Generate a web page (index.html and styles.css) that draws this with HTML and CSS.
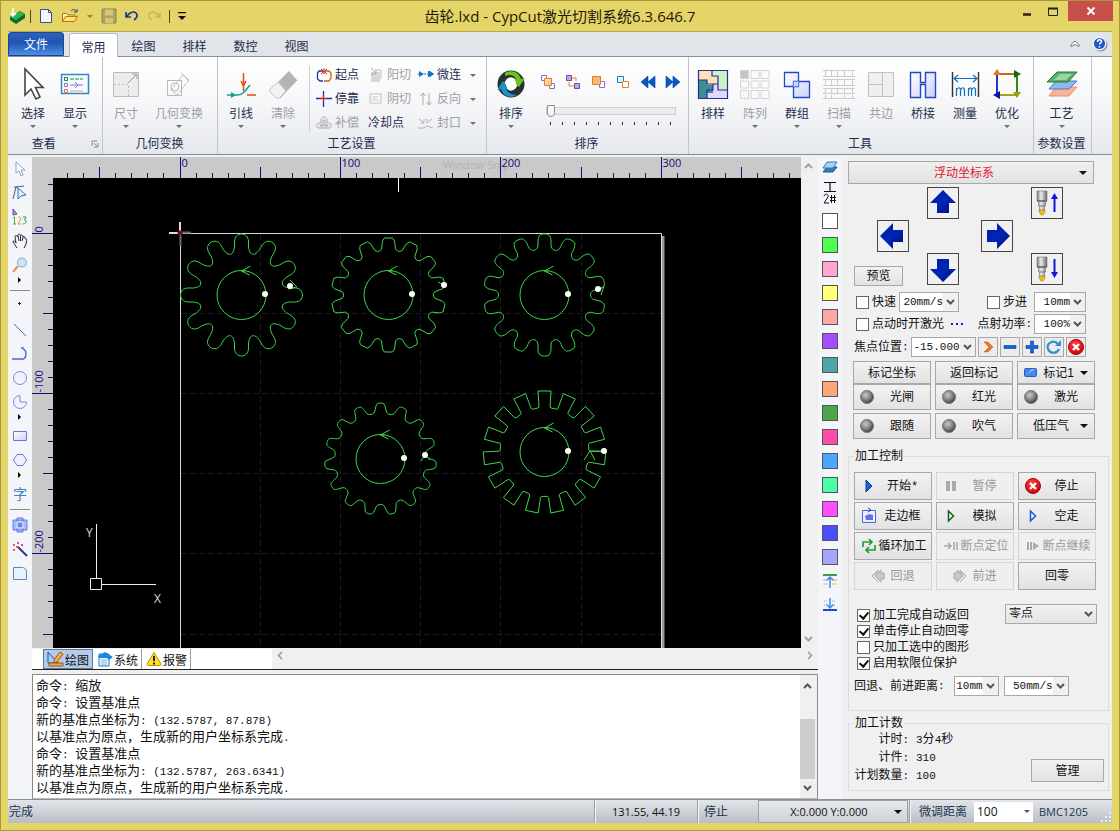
FILE: index.html
```html
<!DOCTYPE html>
<html lang="zh-CN">
<head>
<meta charset="utf-8">
<title>齿轮.lxd - CypCut激光切割系统6.3.646.7</title>
<link rel="stylesheet" href="styles.css">
</head>
<body>
<svg class="defs" width="0" height="0" aria-hidden="true">
  <defs>
    <linearGradient id="gArrow" x1="0" y1="0" x2="1" y2="1"><stop offset="0" stop-color="#0018a8"/><stop offset=".5" stop-color="#0026b8"/><stop offset="1" stop-color="#000c70"/></linearGradient>
    <linearGradient id="gMetal"><stop offset="0" stop-color="#777"/><stop offset=".4" stop-color="#eee"/><stop offset="1" stop-color="#666"/></linearGradient>
    <linearGradient id="gViolet" x1="0" y1="0" x2="1" y2="1"><stop offset="0" stop-color="#fff"/><stop offset="1" stop-color="#cdd0ff"/></linearGradient>
    <linearGradient id="gPeach" x1="0" y1="0" x2="1" y2="1"><stop offset="0" stop-color="#fff0e0"/><stop offset="1" stop-color="#ffb060"/></linearGradient>
    <radialGradient id="gBall" cx=".4" cy=".35" r=".7"><stop offset="0" stop-color="#c8c8c8"/><stop offset=".5" stop-color="#888"/><stop offset="1" stop-color="#333"/></radialGradient>
    <radialGradient id="gStop" cx=".4" cy=".3" r=".8"><stop offset="0" stop-color="#ff4040"/><stop offset="1" stop-color="#c00008"/></radialGradient>
    <symbol id="chev" viewBox="0 0 9 6"><path d="M1 1l3.500 3.500L8 1" fill="none" stroke="#555" stroke-width="2"/></symbol>
    <symbol id="tri" viewBox="0 0 8 4"><path d="M0 0h8L4 4z" fill="currentColor"/></symbol>
    <symbol id="stop" viewBox="0 0 16 16"><circle cx="8" cy="8" r="7.500" fill="url(#gStop)" stroke="#a00"/><path d="M5 5l6 6M11 5l-6 6" stroke="#fff" stroke-width="2.400"/></symbol>
    <symbol id="ball" viewBox="0 0 14 14"><circle cx="7" cy="7" r="6.500" fill="url(#gBall)" stroke="#777"/></symbol>
    <symbol id="nozzle" viewBox="0 0 12 26"><path d="M1 1h10v10H1zM2.500 11h7v5h-7zM3.500 16h5v4h-5z" fill="url(#gMetal)" stroke="#777" stroke-width=".6"/><path d="M1 11h10" stroke="#555"/><path d="M3 20h6v2l-2 3H5l-2-3z" fill="#f0b820" stroke="#a07000" stroke-width=".5"/></symbol>
  </defs>
</svg>
<div class="window">
  <header class="titlebar">
    <div class="quick">
      <svg width="18" height="18" viewBox="0 0 18 18"><path d="M2 10l10-6 5 3v4l-9 6-6-4z" fill="#0b6b2c"/><path d="M2 10l10-6 5 3-9 6z" fill="#35b050"/><path d="M5 1v8M3 6l2 3 3-3" stroke="#fff" fill="none" stroke-width="1.500"/></svg>
      <i class="bar"></i>
      <button aria-label="新建"><svg width="14" height="16" viewBox="0 0 14 16"><path d="M1.500 1.500h8l3 3v10h-11z" fill="#f4f5ff" stroke="#44468c"/><path d="M9.500 1.500v3h3" fill="none" stroke="#44468c"/></svg></button>
      <button aria-label="打开"><svg width="18" height="16" viewBox="0 0 18 16"><path d="M1.500 13.500v-8h4l1.500 1.500h7v2" fill="#fff1b0" stroke="#b87800"/><path d="M1.500 13.500l3-5h12l-3 5z" fill="#ffdf80" stroke="#b87800"/><path d="M10 3c2-2 4-2 6 1M16 1v3h-3" fill="none" stroke="#24408c"/></svg></button>
      <svg class="dim" width="6" height="3"><use href="#tri"/></svg>
      <button aria-label="保存"><svg width="16" height="16" viewBox="0 0 16 16"><path d="M1 1h14v14H1z" fill="#b0a35e" stroke="#918544"/><path d="M4 1.500h8v6H4zM4 10h8v5H4z" fill="#d2c67c"/></svg></button>
      <button aria-label="撤销"><svg width="14" height="12" viewBox="0 0 14 12"><path d="M1 2v5h5M1.500 6.500C5 2 9 1 11 3c2 2 1 5-2 7" fill="none" stroke="#1a3c96" stroke-width="1.700"/></svg></button>
      <button aria-label="重做"><svg width="14" height="12" viewBox="0 0 14 12"><path d="M13 2v5H8M12.500 6.500C9 2 5 1 3 3c-2 2-1 5 2 7" fill="none" stroke="#c2b45c" stroke-width="1.500"/></svg></button>
      <i class="bar"></i>
      <svg width="8" height="8" viewBox="0 0 8 8"><path d="M0 .5h8" stroke="#111" stroke-width="1.500"/><path d="M0 4h8L4 8z" fill="#111"/></svg>
    </div>
    <h1>齿轮.lxd - CypCut激光切割系统6.3.646.7</h1>
    <div class="winbtns">
      <button aria-label="最小化"><svg width="10" height="14" viewBox="0 0 10 14"><path d="M1 10.500h8" stroke="#222" stroke-width="2.500"/></svg></button>
      <button aria-label="最大化"><svg width="12" height="14" viewBox="0 0 12 14"><path d="M1.500 4.500h9v7h-9z" fill="none" stroke="#222"/><path d="M1 4.500h10" stroke="#222" stroke-width="2"/></svg></button>
      <button class="close" aria-label="关闭"><svg width="10" height="10" viewBox="0 0 10 10"><path d="M1.500 1.500l7 7M8.500 1.500l-7 7" stroke="#fff" stroke-width="1.800"/></svg></button>
    </div>
  </header>

  <main class="app">
    <nav class="tabs">
      <button class="file">文件</button>
      <button class="active">常用</button>
      <button>绘图</button><button>排样</button><button>数控</button><button>视图</button>
      <div class="help">
        <svg width="10" height="8" viewBox="0 0 10 8"><path d="M1 4.500l4-3.500 4 3.500v2L5 4.500 1 6.500z" fill="#fff" stroke="#777"/></svg>
        <svg width="16" height="16" viewBox="0 0 16 16"><circle cx="8.500" cy="8.500" r="7" fill="#7f8aa0"/><circle cx="7.500" cy="7.500" r="7" fill="#f4f6fb"/><circle cx="7.500" cy="7.500" r="5.600" fill="#2458c8"/><path d="M5.500 6c0-3 4-2.800 4-.6 0 1.400-2 1.600-2 3.200M7.500 10v1.600" fill="none" stroke="#fff" stroke-width="1.500"/></svg>
      </div>
    </nav>

    <section class="ribbon">
      <div class="group">
        <div class="tools">
          <button class="big"><svg width="32" height="34" viewBox="0 0 32 34"><path d="M8 2v26l6-6 5 10 4-2-4.500-9.500H26z" fill="#fff" stroke="#444" stroke-width="1.600"/></svg>选择<svg class="dd"><use href="#tri"/></svg></button>
          <button class="big"><svg width="32" height="34" viewBox="0 0 32 34"><path d="M2.500 7.500h27v19h-27z" fill="#f4faff" stroke="#3584c8" stroke-width="1.500"/><g fill="none"><path d="M5.500 10.500h3v3h-3z" stroke="#109020"/><path d="M5.500 16.500h3v3h-3z" stroke="#9070d8"/><path d="M5.500 22.500h3v3h-3z" stroke="#e87830"/><path d="M11 12h13" stroke="#109020" stroke-dasharray="4 1"/><path d="M11 18h13M16 15l3 3-3 3" stroke="#9070d8"/><path d="M11 24h13" stroke="#f09888"/></g></svg>显示<svg class="dd"><use href="#tri"/></svg></button>
        </div>
        <div class="cap">查看 <svg class="launch" width="8" height="8" viewBox="0 0 8 8"><path d="M1 6V1h5M3 3l3 3M7 3v4H3" fill="none" stroke="#888"/></svg></div>
      </div>
      <div class="group g2">
        <div class="tools">
          <button class="big" disabled><svg width="32" height="34" viewBox="0 0 32 34"><g fill="#ececee" stroke="#bcbcbc"><path d="M3.500 5.500h25v24h-25z"/><path d="M4 17.500h14.500V29" stroke-dasharray="2 2" fill="none"/><path d="M18 16l8-8M22 7h5v5" fill="none" stroke="#999"/></g></svg>尺寸<svg class="dd"><use href="#tri"/></svg></button>
          <button class="big wide" disabled><svg width="32" height="34" viewBox="0 0 32 34"><g fill="none" stroke="#b8b8b8"><path d="M4.500 13.500h14v15h-14z"/><path d="M8 23l12-15 6 5-12 15z" stroke-dasharray="3 1"/><circle cx="12" cy="20" r="4"/><path d="M18 6l8 8"/></g></svg>几何变换<svg class="dd"><use href="#tri"/></svg></button>
        </div>
        <div class="cap">几何变换</div>
      </div>
      <div class="group g3">
        <div class="tools">
          <button class="big"><svg width="32" height="34" viewBox="0 0 32 34"><path d="M18.500 6v18M16 14l2.500 5 2.500-5M22 28h9" fill="none" stroke="#e84818" stroke-width="1.500"/><path d="M2 28h10c7 0 9-6 13-10" fill="none" stroke="#10a088" stroke-width="1.500"/><path d="M6 25l5 3-5 3z" fill="#10a088"/></svg>引线<svg class="dd"><use href="#tri"/></svg></button>
          <button class="big" disabled><svg width="32" height="34" viewBox="0 0 32 34"><path d="M11 15L22 4l8 9-11 11z" fill="#b4b4b4"/><path d="M11 15l8 9-6 7H9l-6-6v-3z" fill="#f2f2f2" stroke="#c4c4c4"/><path d="M13 31L30 13" stroke="#aaa"/></svg>清除<svg class="dd"><use href="#tri"/></svg></button>
          <div class="small">
            <button><svg viewBox="0 0 16 16"><path d="M7 4H3L1.500 6v6L4 14h3" fill="none" stroke="#2038a0" stroke-width="1.300"/><path d="M8 14h5l2-3V6l-2-2H9" fill="none" stroke="#c86010" stroke-width="1.300"/><path d="M5 2l6 5M11 2L5 7M8 1v6" stroke="#e02020"/></svg>起点</button>
            <button disabled><svg viewBox="0 0 16 16"><path d="M3 5h9v10H3z" fill="#d8d8d8"/><path d="M3 1l5 5M8 2v5H3" stroke="#aaa" fill="none"/><path d="M9 3h4v9" stroke="#bbb" fill="none"/></svg>阳切</button>
            <button><svg viewBox="0 0 16 16"><path d="M0 7h16" stroke="#0878d0" stroke-dasharray="2 1"/><path d="M1 4l5 3-5 3zM10 4h2l4 3-4 3h-2z" fill="#0878d0"/></svg>微连<svg class="dd"><use href="#tri"/></svg></button>
            <button><svg viewBox="0 0 16 16"><path d="M7.500 0v5M7.500 10v6M0 7.500h5M10 7.500h6" stroke="#2828a8" stroke-width="1.300"/><path d="M7.500 5v5M5 7.500h5" stroke="#e02020" stroke-width="1.500"/></svg>停靠</button>
            <button disabled><svg viewBox="0 0 16 16"><path d="M1 2h13v11H1z" fill="#ddd"/><path d="M4 4.500h7v6H4zM7 7h5" fill="none" stroke="#fff"/></svg>阴切</button>
            <button disabled><svg viewBox="0 0 16 16"><path d="M5 14V2M2.500 5L5 2l2.500 3M11 2v12M8.500 11l2.500 3 2.500-3" fill="none" stroke="#aaa"/></svg>反向<svg class="dd"><use href="#tri"/></svg></button>
            <button disabled><svg viewBox="0 0 16 16"><path d="M5 8V5c0-4 6-4 6 0v3h2c3 0 3 5 0 5H3c-3 0-3-5 0-5zM7 10V5h2v5h3v1H4v-1z" fill="none" stroke="#aaa"/></svg>补偿</button>
            <button>冷却点</button>
            <button disabled><svg viewBox="0 0 16 16"><path d="M0 13h6l3-2 6 2M1 4l5 4M6 4v4H3M14 4l-5 4M9 4v4" fill="none" stroke="#b4b4b4"/></svg>封口<svg class="dd"><use href="#tri"/></svg></button>
          </div>
        </div>
        <div class="cap">工艺设置</div>
      </div>
      <div class="group g4">
        <div class="tools">
          <button class="big"><svg width="32" height="34" viewBox="0 0 32 34"><circle cx="16" cy="17" r="10" fill="none" stroke="#243230" stroke-width="7"/><path d="M10 6c7-4 14-1 16 6l4-1-6 9-7-7 4-1c-2-4-6-5-11-3z" fill="#6cc020"/><path d="M22 28c-7 4-14 1-16-6l-4 1 6-9 6 7-3 1c2 4 6 6 11 6z" fill="#2090c8"/><ellipse cx="16" cy="17" rx="5" ry="6.500" fill="#fff"/></svg>排序<svg class="dd"><use href="#tri"/></svg></button>
          <div class="order">
            <div class="orderrow">
              <button aria-label="顺序1"><svg viewBox="0 0 16 16"><path d="M1.500 1.500h5v5h-5z" fill="#fff" stroke="#9068d0"/><path d="M9.500 9.500h5v5h-5z" fill="#fff" stroke="#9068d0"/><path d="M4.500 4.500h7v7h-7z" fill="url(#gPeach)" stroke="#e88020"/></svg></button>
              <button aria-label="顺序2"><svg viewBox="0 0 16 16"><path d="M6 4h5v3M4 8v4h5" fill="none" stroke="#e88020"/><path d="M1.500 1.500h5v5h-5zM9.500 9.500h5v5h-5z" fill="#b8a8ec" stroke="#6050a8"/></svg></button>
              <button aria-label="顺序3"><svg viewBox="0 0 16 16"><path d="M9.500 7.500h5v6h-5z" fill="#fff" stroke="#9068d0"/><path d="M2.500 2.500h8v8h-8z" fill="#f8b870" stroke="#e08030"/></svg></button>
              <button aria-label="顺序4"><svg viewBox="0 0 16 16"><path d="M2.500 2.500h6v6h-6z" fill="#e4f4ff" stroke="#2080c0"/><path d="M7.500 7.500h6v6h-6z" fill="#fff" stroke="#e88020"/></svg></button>
              <button aria-label="向前"><svg viewBox="0 0 16 16"><path d="M8 2v12L1 8zM15 2v12L8 8z" fill="#0858c8" stroke="#043c98" stroke-width=".6"/></svg></button>
              <button aria-label="向后"><svg viewBox="0 0 16 16"><path d="M1 2v12l7-6zM8 2v12l7-6z" fill="#0858c8" stroke="#043c98" stroke-width=".6"/></svg></button>
            </div>
            <input type="range" min="0" max="10" value="0" aria-label="排序进度">
            <div class="ticks"></div>
          </div>
        </div>
        <div class="cap">排序</div>
      </div>
      <div class="group g5">
        <div class="tools">
          <button class="big"><svg width="32" height="34" viewBox="0 0 32 34"><path d="M1 3h30v29H1z" fill="#c8f4c8"/><path d="M1 3h14v6h6v8H10v-4H1z" fill="#fce0b8"/><path d="M1 13h9v5h6v8h-6v6H1z" fill="#3c9090"/><path d="M10 32v-6h6v-9h5v6h10v9z" fill="#e0d8ff"/><path d="M1.500 3.500h29v28h-29zM15 3v6h6v14h10M1 13h9v4h11M16 17v6h-6v9" fill="none" stroke="#2c2c94" stroke-width="1.200"/></svg>排样</button>
          <button class="big" disabled><svg width="32" height="34" viewBox="0 0 32 34"><path d="M2 3h8v8H2z" fill="#c4c4c4"/><path d="M1.500 3.500h8v8h-8zM12 3.500h8v8h-8zM22 3.500h8v8h-8zM1.500 14h8v7h-8zM12 14h8v7h-8zM22 14h8v7h-8zM1.500 23.500h8v8h-8zM12 23.500h8v8h-8zM22 23.500h8v8h-8z" fill="none" stroke="#d4d4d4"/></svg>阵列<svg class="dd"><use href="#tri"/></svg></button>
          <button class="big"><svg width="32" height="34" viewBox="0 0 32 34"><path d="M3.500 5.500h14v14h-14zM12.500 14.500h16v16h-16z" fill="url(#gViolet)" stroke="#2448c0" stroke-width="1.300"/><path d="M12.500 14.500h5v5h-5z" fill="#c8dcff" stroke="#6088e0"/></svg>群组<svg class="dd"><use href="#tri"/></svg></button>
          <button class="big" disabled><svg width="32" height="34" viewBox="0 0 32 34"><path d="M0 3.500h32M0 9.500h32M0 12.500h32M0 18.500h32M0 21.500h32M0 26.500h32M0 31.500h32M2.500 3v6M8.500 3v6M14.500 3v6M21.500 3v6M29.500 3v6M2.500 12v6M8.500 12v6M14.500 12v6M21.500 12v6M29.500 12v6M2.500 21v5M8.500 21v5M14.500 21v5M21.500 21v5M29.500 21v5M2.500 28v4M8.500 28v4M21.500 28v4M29.500 28v4" stroke="#ccc"/></svg>扫描<svg class="dd"><use href="#tri"/></svg></button>
          <button class="big" disabled><svg width="32" height="34" viewBox="0 0 32 34"><path d="M3.500 5.500h25v24h-25zM17.500 5v25M3 17.500h14" fill="#efeff1" stroke="#c0c0c0"/></svg>共边</button>
          <button class="big"><svg width="32" height="34" viewBox="0 0 32 34"><path d="M3.500 5.500h10v10h5v-10h10v25h-10v-13h-5v13h-10z" fill="url(#gViolet)" stroke="#2448c0" stroke-width="1.400"/></svg>桥接</button>
          <button class="big"><svg width="32" height="34" viewBox="0 0 32 34"><path d="M3.500 5v25M29.500 5v25" stroke="#333" stroke-width="1.400"/><path d="M5 11.500h23M9 8l-4 3.500L9 15M24 8l4 3.500-4 3.500M7.500 29v-8M7.500 23c1-3 4-3 4 0v6M11.500 23c1-3 4-3 4 0v6M19.500 29v-8M19.500 23c1-3 3-3 3 0v6M22.500 23c1-3 4-3 4 0v6" fill="none" stroke="#1070c0" stroke-width="1.200"/></svg>测量</button>
          <button class="big"><svg width="32" height="34" viewBox="0 0 32 34"><path d="M6 7h20" stroke="#c86818" stroke-width="2"/><path d="M26 7v21" stroke="#289018" stroke-width="2"/><path d="M6 28h20" stroke="#b0a010" stroke-width="2"/><path d="M6 7v21" stroke="#2038c8" stroke-width="2"/><path d="M2 8l4-6 4 6z" fill="#f07020"/><path d="M23 3l7 4-7 4z" fill="#206010"/><path d="M22 25h8l-4 6z" fill="#90a010"/><path d="M9 24l-7 4 7 4z" fill="#1010b0"/></svg>优化<svg class="dd"><use href="#tri"/></svg></button>
        </div>
        <div class="cap">工具</div>
      </div>
      <div class="group g6">
        <div class="tools">
          <button class="big"><svg width="32" height="34" viewBox="0 0 32 34"><path d="M3 29l7-9h21l-8 9z" fill="#f8b498" stroke="#f08868"/><path d="M3 22l7-8h21l-8 8z" fill="#90b8ec" stroke="#4878d0"/><path d="M1 15L11 5h20l-9 10z" fill="#58b070" stroke="#207838"/><path d="M8 13l6-6h12l-6 6z" fill="#98d8a4"/></svg>工艺<svg class="dd"><use href="#tri"/></svg></button>
        </div>
        <div class="cap">参数设置</div>
      </div>
    </section>

    <div class="work">
      <aside class="lefttools">
        <button aria-label="选择工具"><svg viewBox="0 0 16 16"><path d="M4 1v11l3-2 2 5 2-1-2-5h4z" fill="#fff" stroke="#88a4d0"/></svg></button>
        <button aria-label="节点编辑"><svg viewBox="0 0 16 16"><path d="M1 14L4 2l8-1M2 2h4" fill="none" stroke="#405c90"/><path d="M6 3v11l3-3 5-1z" fill="#e0f0ff" stroke="#3070b8"/></svg></button>
        <button aria-label="排序工具"><svg viewBox="0 0 16 16"><path d="M1 0v6l4-1z" fill="#b090f0" stroke="#6048a8"/><g fill="none"><path d="M1 9l1.500-1v7M1 15h3" stroke="#50a840"/><path d="M6 9c1-2 3-1 3 1L6 15h3.500" stroke="#e0a020"/><path d="M11 8h3l-1.500 3c3 0 2 4-1.500 4" stroke="#309858"/></g></svg></button>
        <button aria-label="平移"><svg viewBox="0 0 16 16"><path d="M5 15L1 9c0-2 2-1 3 1L3 4c0-2 2-2 2.500 0L6 2c1-2 2-1 2.500 1 1-2 2.500-1 2.500 1 1.500-1 2.500 0 2 2 2-1 2 1 1 5l-2 4M6 3l1 5M8.500 3v5M11 4l-1 4" fill="none" stroke="#282838"/></svg></button>
        <button aria-label="缩放"><svg viewBox="0 0 16 16"><path d="M6 9l-5 6" stroke="#e89870" stroke-width="2.500"/><circle cx="10" cy="5.500" r="4.500" fill="#c8e8f8" stroke="#78a8c8"/></svg></button>
        <i class="fly"></i><hr>
        <button aria-label="点"><svg viewBox="0 0 16 16"><path d="M7.500 4v3M6 5.500h3" stroke="#222"/></svg></button>
        <button aria-label="直线"><svg viewBox="0 0 16 16"><path d="M2 2l12 12" stroke="#5068b8"/></svg></button>
        <button aria-label="圆弧"><svg viewBox="0 0 16 16"><path d="M1 13h9c5 0 5-9 1-10" fill="none" stroke="#4870c8" stroke-width="1.400"/><path d="M0 12h2v2H0zM9 12h3v2H9zM9 1h3v2H9z" fill="#6890d8"/></svg></button>
        <button aria-label="圆"><svg viewBox="0 0 16 16"><circle cx="8" cy="8" r="6.500" fill="#f0f2ff" stroke="#8088d8"/></svg></button>
        <button aria-label="扇形"><svg viewBox="0 0 16 16"><path d="M8 1.500a6.500 6.500 0 1 0 6.500 6.500H8z" fill="#f0f2ff" stroke="#8088d8"/></svg></button>
        <i class="fly"></i>
        <button aria-label="矩形"><svg viewBox="0 0 16 16"><path d="M1.500 3.500h13v9h-13z" fill="url(#gViolet)" stroke="#7078c8"/></svg></button>
        <button aria-label="多边形"><svg viewBox="0 0 16 16"><path d="M5 2.500h6L14.500 8 11 13.500H5L1.500 8z" fill="#eef2ff" stroke="#6880c8"/></svg></button>
        <i class="fly"></i>
        <button class="zi">字</button>
        <hr>
        <button aria-label="阵列工具"><svg viewBox="0 0 16 16"><path d="M1 3h6v10H1zM9 3h6v10H9zM5 1h6v14H5z" fill="#a8b8f8" stroke="#6080e0"/><path d="M5 5h6v6H5z" fill="#6888f0" stroke="#fff"/></svg></button>
        <button aria-label="魔棒"><svg viewBox="0 0 16 16"><path d="M6 6l9 9" stroke="#383090" stroke-width="2"/><path d="M1 3h2v2H1zM5 1h2v2H5zM9 3h2v2H9zM1 8h2v2H1zM4 5h2v2H4z" fill="#e05870"/></svg></button>
        <button aria-label="倒角"><svg viewBox="0 0 16 16"><path d="M1.500 2.500h9c2 0 4 2 4 4v8h-13z" fill="#e8f2ff" stroke="#5888c0"/></svg></button>
      </aside>

      <section class="center">
        <div class="stage">
          <svg class="hruler" id="hruler"></svg>
          <svg class="vruler" id="vruler"></svg>
          <svg class="canvas" id="canvas">
            <g id="grid" stroke="#191922" stroke-dasharray="6 3"></g>
            <path d="M345.500 0v14" stroke="#fff"/>
            <path d="M610 58v800" stroke="#999" stroke-width="3"/>
            <path d="M127.500 900V55.500H608.500V900" fill="none" stroke="#d8d8d8"/>
            <path d="M116 55h10M127 44v10" stroke="#ddd" stroke-width="2"/>
            <path d="M128 54.500h10M127.500 58v10" stroke="#666" stroke-width="2"/>
            <circle cx="127" cy="55" r="2.500" fill="#700818"/>
            <g id="gears" fill="none" stroke="#3cd84a"></g>
            <g fill="none" stroke="#eee"><path d="M43.500 346v55M48 406.500h55M37.500 400.500h11v11h-11z"/></g>
            <g class="axis"><text x="33" y="359">Y</text><text x="101" y="425">X</text></g>
          </svg>
          <div class="vscroll">
            <svg width="9" height="6"><use href="#chev" transform="rotate(180 4.500 3)"/></svg>
            <svg width="9" height="6"><use href="#chev"/></svg>
          </div>
        </div>
        <div class="logtabs">
          <div class="tabset">
            <button class="on"><svg width="17" height="16" viewBox="0 0 17 16"><path d="M1 1v11h10z" fill="#a8ccff" stroke="#1850b0"/><path d="M7 9l6-8 3 2-6 8-3 1z" fill="#ffb030" stroke="#a05010"/><path d="M2 12h14v3H2z" fill="#e8b050" stroke="#905818"/></svg><span>绘图</span></button>
            <button><svg width="16" height="16" viewBox="0 0 16 16"><path d="M2 3h10v12H2z" fill="#e8f4ff" stroke="#2080d0"/><path d="M1 5l7-4 8 5-4 3-2-2H2z" fill="#1888e0"/><path d="M4 9h6M4 11h6M4 13h6" stroke="#88b8e8"/></svg><span>系统</span></button>
            <button><svg width="16" height="16" viewBox="0 0 16 16"><path d="M8 1.500L15 13c0 1-.5 1.500-1.500 1.500h-11C1.500 14.500 1 14 1 13z" fill="#ffe020" stroke="#b89000"/><path d="M8 5v5M8 11.500v2" stroke="#222" stroke-width="2"/></svg><span>报警</span></button>
          </div>
          <div class="hscroll">
            <svg width="6" height="9" viewBox="0 0 6 9"><path d="M5 1L1.500 4.500 5 8" fill="none" stroke="#999" stroke-width="1.500"/></svg>
            <svg width="6" height="9" viewBox="0 0 6 9"><path d="M1 1l3.500 3.500L1 8" fill="none" stroke="#999" stroke-width="1.500"/></svg>
          </div>
        </div>
        <div class="log">
          <div class="lines">
            <p>命令<span>: </span>缩放</p>
            <p>命令<span>: </span>设置基准点</p>
            <p>新的基准点坐标为<span>: (132.5787, 87.878)</span></p>
            <p>以基准点为原点，生成新的用户坐标系完成<span>.</span></p>
            <p>命令<span>: </span>设置基准点</p>
            <p>新的基准点坐标为<span>: (132.5787, 263.6341)</span></p>
            <p>以基准点为原点，生成新的用户坐标系完成<span>.</span></p>
          </div>
          <div class="logscroll">
            <svg width="9" height="6"><use href="#chev" transform="rotate(180 4.500 3)"/></svg>
            <i></i>
            <svg width="9" height="6"><use href="#chev"/></svg>
          </div>
        </div>
      </section>

      <aside class="layers">
        <button class="stack" aria-label="图层"><svg viewBox="0 0 16 16"><path d="M1 13l4-5h10l-4 5z" fill="#3878b8" stroke="#205890"/><path d="M1 9l4-6h10l-4 6z" fill="#a8d4f4" stroke="#3878b0"/></svg></button>
        <button class="proc" aria-label="工艺图层"><svg viewBox="0 0 14 24"><path d="M1 1.500h12M1 10.500h12M7 2v8" fill="none" stroke="#111" stroke-width="1.200"/><path d="M1 15c1-3 5-2 4 1l-4 6h5M7 16.500h6M7 19.500h6M8.500 14v8M11.500 14v8" fill="none" stroke="#111"/></svg></button>
        <button class="sw" aria-label="背景"></button>
        <button class="sw c1" aria-label="图层1"></button>
        <button class="sw c2" aria-label="图层2"></button>
        <button class="sw c3" aria-label="图层3"></button>
        <button class="sw c4" aria-label="图层4"></button>
        <button class="sw c5" aria-label="图层5"></button>
        <button class="sw c6" aria-label="图层6"></button>
        <button class="sw c7" aria-label="图层7"></button>
        <button class="sw c8" aria-label="图层8"></button>
        <button class="sw c9" aria-label="图层9"></button>
        <button class="sw c10" aria-label="图层10"></button>
        <button class="sw c11" aria-label="图层11"></button>
        <button class="sw c12" aria-label="图层12"></button>
        <button class="sw c13" aria-label="图层13"></button>
        <button class="sw c14" aria-label="图层14"></button>
        <button aria-label="最先"><svg viewBox="0 0 16 16"><path d="M1 2h14" stroke="#38a048" stroke-width="2"/><path d="M8 15V4M4.500 7.500L8 4l3.500 3.500" fill="none" stroke="#3890e0" stroke-width="1.500"/><path d="M1 7h3M12 7h3" stroke="#80c0f0"/><path d="M1 11h5M10 11h5" stroke="#e0c050"/></svg></button>
        <button aria-label="最后"><svg viewBox="0 0 16 16"><path d="M1 13h14" stroke="#2048c8" stroke-width="2"/><path d="M8 1v10M4.500 7.500L8 11l3.500-3.500" fill="none" stroke="#3890e0" stroke-width="1.500"/><path d="M2 4h4M10 4h4M2 8h2M12 8h2" stroke="#60b0f0" stroke-dasharray="1 1"/></svg></button>
      </aside>

      <aside class="panel">
        <button class="coord"><span>浮动坐标系</span><svg width="8" height="4"><use href="#tri"/></svg></button>
        <div class="jog">
          <button class="up" aria-label="上"><svg viewBox="0 0 26 26"><path d="M13 0l13 13h-7v10H7V13H0z" fill="url(#gArrow)"/></svg></button>
          <button class="left" aria-label="左"><svg viewBox="0 0 26 26"><path d="M0 13L13 0v7h10v12H13v7z" fill="url(#gArrow)"/></svg></button>
          <button class="right" aria-label="右"><svg viewBox="0 0 26 26"><path d="M26 13L13 0v7H3v12h10v7z" fill="url(#gArrow)"/></svg></button>
          <button class="down" aria-label="下"><svg viewBox="0 0 26 26"><path d="M13 26l13-13h-7V3H7v10H0z" fill="url(#gArrow)"/></svg></button>
          <button class="zup" aria-label="Z轴上"><svg viewBox="0 0 26 26"><use href="#nozzle" width="12" height="26" x="2"/><path d="M20.500 22V6" stroke="#1414d8" stroke-width="2"/><path d="M17 9l3.500-6L24 9z" fill="#1414d8"/></svg></button>
          <button class="zdown" aria-label="Z轴下"><svg viewBox="0 0 26 26"><use href="#nozzle" width="12" height="26" x="2"/><path d="M20.500 3v16" stroke="#1414d8" stroke-width="2"/><path d="M17 16l3.500 6 3.500-6z" fill="#1414d8"/></svg></button>
          <button class="btn preview">预览</button>
        </div>
        <div class="row">
          <label><input type="checkbox">快速</label>
          <span class="combo w60"><select aria-label="快速速度"><option>20mm/s</option></select><svg><use href="#chev"/></svg></span>
          <label class="push"><input type="checkbox">步进</label>
          <span class="combo w52"><select aria-label="步进距离"><option>10mm</option></select><svg><use href="#chev"/></svg></span>
        </div>
        <div class="row">
          <label><input type="checkbox">点动时开激光</label>
          <svg class="dots" width="12" height="4" viewBox="0 0 12 4"><path d="M0 1h2v2H0zM5 1h2v2H5zM10 1h2v2h-2z" fill="#1818e0"/></svg>
          <label class="push tight" for="pw">点射功率<span class="mono">:</span></label>
          <span class="combo w52"><select id="pw"><option>100%</option></select><svg><use href="#chev"/></svg></span>
        </div>
        <div class="row focus">
          <label for="fp">焦点位置<span class="mono">:</span></label>
          <span class="combo w65"><select id="fp"><option>-15.000</option></select><svg><use href="#chev"/></svg></span>
          <button aria-label="定位"><svg viewBox="0 0 16 16"><path d="M4 3l5 5-5 5h4l5-5-5-5z" fill="#e87828" stroke="#b85010" stroke-width=".5"/></svg></button>
          <button aria-label="减"><svg viewBox="0 0 16 16"><path d="M2 6.500h12v3H2z" fill="#1068d8" stroke="#083c90" stroke-width=".6"/></svg></button>
          <button aria-label="加"><svg viewBox="0 0 16 16"><path d="M2 6.500h4.500V2h3v4.500H14v3H9.500V14h-3V9.500H2z" fill="#1068d8" stroke="#083c90" stroke-width=".6"/></svg></button>
          <button aria-label="刷新"><svg viewBox="0 0 16 16"><path d="M13 10c-2 5-9 5-11 0-2-6 6-10 10-5" fill="none" stroke="#3090d0" stroke-width="2.200"/><path d="M9 7h6V1z" fill="#3090d0"/></svg></button>
          <button aria-label="取消"><svg><use href="#stop"/></svg></button>
        </div>
        <div class="grid3 marks">
          <button class="btn">标记坐标</button><button class="btn">返回标记</button>
          <button class="btn ic"><svg width="13" height="11" viewBox="0 0 13 11"><rect x=".5" y="1.500" width="12" height="8" rx="1" fill="#4888e8" stroke="#2060c0"/><path d="M2 8l6-6h3z" fill="#90c0ff"/></svg><span>标记1</span><svg width="8" height="4"><use href="#tri"/></svg></button>
        </div>
        <div class="grid3 sw-row">
          <button class="btn ic"><svg class="b"><use href="#ball"/></svg><span>光闸</span></button>
          <button class="btn ic"><svg class="b"><use href="#ball"/></svg><span>红光</span></button>
          <button class="btn ic"><svg class="b"><use href="#ball"/></svg><span>激光</span></button>
          <button class="btn ic"><svg class="b"><use href="#ball"/></svg><span>跟随</span></button>
          <button class="btn ic"><svg class="b"><use href="#ball"/></svg><span>吹气</span></button>
          <button class="btn ic low"><span>低压气</span><svg width="8" height="4"><use href="#tri"/></svg></button>
        </div>

        <fieldset class="control">
          <legend>加工控制</legend>
          <div class="grid3">
            <button class="btn ic"><svg width="16" height="16" viewBox="0 0 16 16"><path d="M5 2v12l6-6z" fill="#1068d8" stroke="#083c90"/></svg><span>开始<b>*</b></span></button>
            <button class="btn ic" disabled><svg width="16" height="16" viewBox="0 0 16 16"><path d="M3 3h4v10H3zM9 3h4v10H9z" fill="#aaa"/></svg><span>暂停</span></button>
            <button class="btn ic"><svg width="16" height="16"><use href="#stop"/></svg><span>停止</span></button>
            <button class="btn ic"><svg width="16" height="16" viewBox="0 0 16 16"><path d="M1.500 2.500h13v12h-13z" fill="#eef0ff" stroke="#4868d8"/><path d="M4 8l4-2 4 1v5H5z" fill="#6070f0"/><path d="M7 0l3 2-3 2" fill="none" stroke="#2040a0"/></svg><span>走边框</span></button>
            <button class="btn ic"><svg width="16" height="16" viewBox="0 0 16 16"><path d="M5.500 3v10l5-5z" fill="#e8ffe8" stroke="#106020" stroke-width="1.500"/></svg><span>模拟</span></button>
            <button class="btn ic"><svg width="16" height="16" viewBox="0 0 16 16"><path d="M5.500 3v10l5-5z" fill="#f0f8ff" stroke="#1858c8" stroke-width="1.500"/></svg><span>空走</span></button>
            <button class="btn ic"><svg width="16" height="16" viewBox="0 0 16 16"><path d="M2 9V4h9M8 1l3 3-3 3M14 7v5H5M8 9l-3 3 3 3" fill="none" stroke="#20a030" stroke-width="1.700"/></svg><span>循环加工</span></button>
            <button class="btn ic" disabled><svg width="16" height="16" viewBox="0 0 16 16"><path d="M1 8h7M5 5l3 3-3 3M11 4v8M14 4v8" fill="none" stroke="#aaa" stroke-width="1.600"/></svg><span>断点定位</span></button>
            <button class="btn ic" disabled><svg width="16" height="16" viewBox="0 0 16 16"><path d="M2 4h2v8H2zM5 4h2v8H5zM8 4v8l6-4z" fill="#aaa"/></svg><span>断点继续</span></button>
            <button class="btn mid" disabled><svg width="14" height="14" viewBox="0 0 14 14"><path d="M1 7l6-6v4M4 7l6-6v3h3v6h-3v3zM1 7l6 6" fill="#c8c8c8" stroke="#aaa"/></svg>回退</button>
            <button class="btn mid" disabled><svg width="14" height="14" viewBox="0 0 14 14"><path d="M13 7L7 1v4M10 7L4 1v3H1v6h3v3zM13 7l-6 6" fill="#c8c8c8" stroke="#aaa"/></svg>前进</button>
            <button class="btn">回零</button>
          </div>
          <div class="options">
            <div class="checks">
              <label><input type="checkbox" checked>加工完成自动返回</label>
              <label><input type="checkbox" checked>单击停止自动回零</label>
              <label><input type="checkbox">只加工选中的图形</label>
              <label><input type="checkbox" checked>启用软限位保护</label>
            </div>
            <span class="combo grey"><select aria-label="返回位置"><option>零点</option></select><svg><use href="#chev"/></svg></span>
          </div>
          <div class="row dist">
            <label for="bd">回退、前进距离<span class="mono">:</span></label>
            <span class="combo w45"><select id="bd"><option>10mm</option></select><svg><use href="#chev"/></svg></span>
            <span class="combo w65"><select aria-label="回退速度"><option>50mm/s</option></select><svg><use href="#chev"/></svg></span>
          </div>
        </fieldset>

        <fieldset class="count">
          <legend>加工计数</legend>
          <dl>
            <dt>计时<span class="mono">:</span></dt><dd><span class="mono">3</span>分<span class="mono">4</span>秒</dd>
            <dt>计件<span class="mono">:</span></dt><dd><span class="mono">310</span></dd>
            <dt>计划数量<span class="mono">:</span></dt><dd><span class="mono">100</span></dd>
          </dl>
          <button class="btn">管理</button>
        </fieldset>
      </aside>
    </div>

    <footer class="status">
      <span class="msg">完成</span>
      <span class="pos">131.55, 44.19</span>
      <span class="state">停止</span>
      <button class="xy"><span>X:0.000 Y:0.000</span><svg width="8" height="4"><use href="#tri"/></svg></button>
      <label for="nudge">微调距离</label>
      <span class="combo nudge"><select id="nudge"><option>100</option></select><svg class="t"><use href="#tri"/></svg></span>
      <span class="model">BMC1205</span>
      <svg class="grip" width="12" height="12" viewBox="0 0 12 12"><path d="M9 1h2v2H9zM5 5h2v2H5zM9 5h2v2H9zM1 9h2v2H1zM5 9h2v2H5zM9 9h2v2H9z" fill="#eef1f4"/></svg>
    </footer>
  </main>
</div>
<script src="script.js"></script>
</body>
</html>
```
FILE: styles.css
```css
* { box-sizing: border-box; }
body {
  margin: 0;
  font: 12px/16px "Liberation Sans", "Noto Sans CJK SC", sans-serif;
  color: #111;
}
button { font: inherit; color: inherit; border: 0; background: none; padding: 0; margin: 0; }
svg { display: block; flex: none; }
.defs { position: absolute; }
.mono { font-family: "Liberation Mono", monospace; font-size: 11px; }

.window {
  min-height: 100vh;
  display: flex;
  flex-direction: column;
  background: #e5d468;
  border: 1px solid #a4983c;
  padding: 0 7px 7px;
}
.titlebar {
  height: 30px;
  display: grid;
  grid-template-columns: 1fr auto 1fr;
  align-items: center;
}
.titlebar h1 {
  margin: 0;
  font: 15px/20px "Open Sans", "Noto Sans CJK SC", sans-serif;
  color: #1c1a08;
}
.quick { display: flex; align-items: center; gap: 8px; }
.quick > svg:first-child { margin-right: -4px; }
.quick .bar { width: 1px; height: 13px; background: #4a4420; }
.quick .dim { color: #8f8340; }
.winbtns { display: flex; justify-content: flex-end; align-items: flex-start; align-self: start; gap: 15px; }
.winbtns button { height: 20px; display: grid; place-items: center; }
.winbtns .close { width: 45px; background: #c8504c; margin-left: -6px; margin-right: -1px; }

.app { flex: 1; display: flex; flex-direction: column; background: #f0f0f0; border-top: 1px solid #b4a850; }
.tabs {
  display: flex;
  height: 25px;
  background: #e1e5e9;
  color: #1e2c4c;
  border-bottom: 1px solid #888d94;
}
.tabs button { width: 51px; padding-top: 5px; }
.tabs .file {
  width: 56px;
  margin-right: 5px;
  color: #fff;
  padding-top: 2px;
  background: linear-gradient(#2c62b8, #1f55b4 45%, #4b8fe8);
  border: 1px solid #1c468e;
  border-radius: 3px 3px 0 0;
}
.tabs .active {
  width: 49px;
  background: #fff;
  border: 1px solid #b8bcc2;
  border-bottom: 0;
  border-radius: 3px 3px 0 0;
  height: 25px;
  margin-top: 1px;
  padding-top: 3px;
}
.help { margin-left: auto; display: flex; align-items: center; gap: 12px; padding-right: 4px; }

.ribbon {
  display: flex;
  height: 98px;
  background: linear-gradient(#fff, #f4f5f7 55%, #e4e7ec);
  border-bottom: 1px solid #888d94;
  color: #1e2c4c;
}
.group {
  display: flex;
  flex-direction: column;
  justify-content: space-between;
  width: 95px;
  padding: 10px 3px 0 4px;
  border-right: 1px solid #c0c4ca;
}
.g2 { width: 115px; padding-left: 2px; }
.g3 { width: 269px; padding-left: 2px; }
.g4 { width: 202px; padding: 10px 5px 0 3px; }
.g5 { width: 345px; padding: 10px 5px 0 3px; }
.g6 { width: 58px; padding: 10px 2px 0 0; }
.g6 .tools { justify-content: center; }
.tools { display: flex; }
.cap { text-align: center; line-height: 23px; height: 21px; white-space: nowrap; }
.launch { display: inline-block; margin-left: 32px; margin-right: -32px; }
.group:first-child .cap { padding-right: 12px; }
.big {
  width: 42px;
  display: flex;
  flex-direction: column;
  align-items: center;
  line-height: 16px;
}
.big > svg:first-child { margin-bottom: 5px; }
.big.wide { width: 64px; }
button:disabled { color: #9c9fa5; }
.dd { width: 6px; height: 3px; color: #6c7078; margin-top: 3px; }
.small {
  display: grid;
  grid-template: repeat(3, 24px) / 52px 50px 60px;
  margin: -1px 0 0 5px;
  padding-left: 6px;
  border-left: 1px solid #cdd0d5;
  height: 66px;
  align-content: center;
}
.small button { display: flex; align-items: center; gap: 3px; white-space: nowrap; }
.small button > svg:first-child { width: 16px; height: 16px; }
.small .dd { margin: 0 0 0 6px; }
.order { padding: 7px 0 0 14px; }
.orderrow { display: grid; grid-template-columns: repeat(6, 16px); gap: 9px; margin-left: -6px; }
.orderrow button > svg { width: 16px; height: 16px; }
.order input {
  appearance: none;
  width: 130px;
  height: 8px;
  margin: 17px 0 0;
  display: block;
  border: 1px solid #cfcfcf;
  background: #ececec;
}
.order input::-webkit-slider-thumb { appearance: none; width: 8px; height: 12px; background: #f6f6f6; border: 1px solid #909090; border-radius: 0 0 4px 4px; }
.ticks { height: 3px; width: 123px; margin: 7px 0 0 4px; background: repeating-linear-gradient(90deg, #333 0 1px, transparent 1px 12px); }

.work { flex: 1; display: grid; grid-template-columns: 24px minmax(0, 1fr) 24px 270px; background: #f0f0f0; padding-top: 2px; }
.lefttools, .layers { background: #f3f5f9; display: flex; flex-direction: column; }
.lefttools button, .layers button { height: 24px; display: grid; place-items: center; }
.lefttools svg, .layers svg { width: 16px; height: 16px; }
.lefttools hr { width: 20px; margin: 3px 2px; border: 0; height: 1px; background: #888; }
.fly { height: 10px; padding: 0 0 0 10px; }
.fly::before { content: ""; display: block; width: 0; border: 3px solid transparent; border-left: 3px solid #000; border-right: 0; }
.zi { color: #4080c0; font-size: 14px; }

.center { display: flex; flex-direction: column; }
.stage {
  flex: 1;
  display: grid;
  grid-template: 21px minmax(0, 1fr) / 21px minmax(0, 1fr) 17px;
}
.stage text { font: 11px "Open Sans", sans-serif; fill: #10107c; }
.stage .axis text { fill: #ddd; font-size: 12px; }
.stage .ghost { fill: #b2b2b2; font-size: 11px; }
.hruler { grid-area: 1 / 1 / 2 / 3; width: 100%; height: 100%; background: #c9c9c9; overflow: visible; }
.vruler { grid-area: 2 / 1; width: 100%; height: 100%; background: #c9c9c9; }
.canvas { grid-area: 2 / 2; width: 100%; height: 100%; background: #000; }
.vscroll { grid-area: 1 / 3 / 3 / 4; display: flex; flex-direction: column; align-items: center; justify-content: space-between; padding: 6px 2px 6px 0; opacity: .5; }
.logtabs { display: flex; height: 21px; border-bottom: 1px solid #222; margin-top: 1px; }
.tabset { width: 240px; background: #fff; display: flex; padding-left: 11px; }
.tabset button { display: flex; align-items: center; gap: 1px; padding: 0 3px; border-right: 1px solid #999; margin-right: 1px; }
.tabset span { padding-top: 3px; }
.tabset .on { background: #b4cbe9; border: 1px solid #5a7698; }
.hscroll { flex: 1; display: flex; justify-content: space-between; padding: 2px 5px; }
.log { margin-top: 4px; height: 125px; background: #fff; border: 1px solid #8a8a8a; border-bottom-color: #b8b8b8; display: flex; justify-content: space-between; }
.lines { padding: 2px 3px; font-size: 13px; line-height: 17px; }
.lines p { margin: 0; white-space: pre; }
.lines span { font: 11px "Liberation Mono", monospace; }
.logscroll { width: 17px; background: #f0f0f0; display: flex; flex-direction: column; align-items: center; padding: 8px 2px 7px 0; }
.logscroll i { width: 15px; height: 60px; background: #cdcdcd; margin: auto 0 6px; }

.layers .stack { height: 20px; }
.layers .proc { height: 32px; }
.layers .proc svg { width: 14px; height: 24px; }
.layers .sw::before { content: ""; width: 14px; height: 14px; border: 1px solid #555; background: #fff; }
.layers .c1::before { background: #4cff4c; }
.layers .c2::before { background: #ffa6d2; }
.layers .c3::before { background: #ffff78; }
.layers .c4::before { background: #ffa6a6; }
.layers .c5::before { background: #a64cff; }
.layers .c6::before { background: #4ca6a6; }
.layers .c7::before { background: #ffa678; }
.layers .c8::before { background: #4ca64c; }
.layers .c9::before { background: #ff4ca6; }
.layers .c10::before { background: #4ca6ff; }
.layers .c11::before { background: #4cffa6; }
.layers .c12::before { background: #ff4cff; }
.layers .c13::before { background: #4c4cff; }
.layers .c14::before { background: #a6a6ff; }

.panel { padding: 4px 3px 0 6px; display: flex; flex-direction: column; }
.coord {
  height: 23px;
  margin-right: 15px;
  display: flex;
  align-items: center;
  padding: 0 6px;
  border: 1px solid #a8a8a8;
  background: linear-gradient(#f0f0f0, #e2e2e2);
}
.coord span { flex: 1; color: #e0182c; padding-right: 6px; }
.jog {
  display: grid;
  grid-template: repeat(3, 33px) / 23px 25px 25px 32px 22px 32px 18px 32px;
  margin: 3px 0 0 6px;
}
.jog button { width: 32px; height: 32px; border: 1px solid #444; display: grid; place-items: center; }
.jog svg { width: 26px; height: 26px; }
.jog .up { grid-area: 1 / 4; }
.jog .left { grid-area: 2 / 2; }
.jog .right { grid-area: 2 / 6; }
.jog .down { grid-area: 3 / 4; }
.jog .zup { grid-area: 1 / 8; }
.jog .zdown { grid-area: 3 / 8; }
.jog .preview { grid-area: 3 / 1 / 4 / 3; width: 49px; height: 20px; align-self: end; border-color: #a8a8a8; }

.btn { border: 1px solid #a8a8a8; background: linear-gradient(#f2f2f2, #e2e2e2); }
.btn:disabled { border-color: #d4d4d4; background: #efefef; color: #999; }
.row { display: flex; align-items: center; gap: 3px; height: 22px; padding: 0 23px 0 8px; white-space: nowrap; }
.jog + .row { margin-top: 5px; }
label { display: flex; align-items: center; }
input[type="checkbox"] { appearance: none; width: 13px; height: 13px; margin: 0 3px 0 0; border: 1px solid #666; background: #fff; }
input[type="checkbox"]:checked::after {
  content: "";
  display: block;
  width: 4px;
  height: 7px;
  margin: 0 0 0 3px;
  border: solid #111;
  border-width: 0 2px 2px 0;
  transform: rotate(40deg);
}
.push { margin-left: auto; margin-right: 4px; }
.tight { margin-right: -1px; }
.dots { margin-left: 4px; }
.combo { display: grid; align-items: center; }
.combo select {
  grid-area: 1 / 1;
  appearance: none;
  width: 100%;
  height: 20px;
  padding: 0 15px 0 0;
  border: 1px solid #a8a8a8;
  border-radius: 0;
  background: linear-gradient(90deg, #fff calc(100% - 15px), #f0f0f0 calc(100% - 15px));
  font: 11px "Liberation Mono", "Noto Sans CJK SC", monospace;
  color: #111;
  text-align: right;
  text-align-last: right;
}
.combo svg { grid-area: 1 / 1; justify-self: end; margin-right: 4px; width: 9px; height: 6px; pointer-events: none; }
.w45 { width: 45px; }
.w52 { width: 52px; }
.w60 { width: 60px; }
.w65 { width: 65px; }
.focus { height: 24px; gap: 2px; padding-left: 6px; }
.focus button { width: 20px; height: 20px; border: 1px solid #a8a8a8; display: grid; place-items: center; background: #ececec; }
.focus button svg { width: 16px; height: 16px; }
.grid3 { display: grid; grid-template-columns: repeat(3, 78px); gap: 3px 4px; }
.marks { margin: 2px 0 0 5px; grid-auto-rows: 23px; }
.sw-row { margin: 0 0 0 5px; grid-auto-rows: 26px; }
.ic { display: flex; align-items: center; padding: 0 6px; }
.ic span { flex: 1; text-align: center; white-space: nowrap; }
.ic svg + span { margin-left: 6px; }
.marks .ic svg + span { margin-left: 0; }
.low span { padding-right: 2px; }
.ic b { font: 12px "Liberation Mono", monospace; }
.ic .b { width: 14px; height: 14px; }
.mid { display: flex; align-items: center; justify-content: center; gap: 5px; }
fieldset { margin: 0; min-width: 0; border: 1px solid #dcdcdc; padding: 0 0 0 5px; }
legend { padding: 0 1px; line-height: 16px; }
.control { margin-top: 9px; height: 263px; }
.control .grid3 { padding-top: 8px; grid-auto-rows: 28px; gap: 2px 4px; }
.control .ic { padding: 0 4px 0 6px; }
.control .ic svg + span { margin-left: 1px; }
.options { display: flex; justify-content: space-between; padding: 17px 11px 0 3px; align-items: flex-start; }
.checks { display: grid; grid-auto-rows: 16px; }
.combo.grey { width: 92px; margin-top: -3px; }
.combo.grey select { background: linear-gradient(#f2f2f2, #e4e4e4); font-size: 12px; text-align: left; text-align-last: left; padding-left: 3px; }
.dist { padding: 0; margin-top: 4px; }
.dist label { margin-right: 6px; }
.dist .combo + .combo { margin-left: 2px; }
.count { margin-top: 4px; height: 76px; display: flex; justify-content: space-between; align-items: flex-end; padding-right: 4px; padding-bottom: 2px; }
.count dl { margin: 0 0 -3px; display: grid; grid-template-columns: 55px auto; column-gap: 7px; grid-auto-rows: 18px; }
.count dt { text-align: right; white-space: nowrap; }
.count dd { margin: 0; }
.count .btn { width: 73px; height: 23px; }

.status {
  height: 24px;
  display: flex;
  align-items: stretch;
  line-height: 24px;
  background: linear-gradient(#e2e5e9, #c9ced5 60%, #b6bdc5);
  border-top: 1px solid #8a9098;
  color: #26344c;
}
.status > span, .status > label { border-left: 1px solid #f2f4f6; box-shadow: -1px 0 #98a0a8; font-family: "Open Sans", "Noto Sans CJK SC", sans-serif; white-space: nowrap; }
.status .msg { flex: 1; border: 0; box-shadow: none; padding-left: 1px; }
.pos { width: 103px; padding-left: 16px; font-size: 11px; color: #111; }
.state { width: 60px; padding-left: 5px; }
.xy { width: 150px; display: flex; align-items: center; border: 1px solid #98a0a8; background: linear-gradient(#e6e8ea, #cfd3d8); padding: 0 5px; font: 11px "Open Sans", sans-serif; color: #111; }
.xy span { flex: 1; }
.status label { padding: 0 7px 0 8px; margin-left: 2px; }
.status .combo { width: 59px; border: 0; box-shadow: none; }
.nudge select { background: #fff; border: 0; text-align: left; text-align-last: left; font: 12px "Open Sans", sans-serif; padding-left: 3px; }
.nudge .t { width: 6px; height: 3px; color: #555; margin-right: 3px; }
.status .model { border: 0; box-shadow: none; padding: 0 12px 0 6px; font-size: 11px; }
.grip { align-self: end; }
```
FILE: script.js
```js
const NS = "http://www.w3.org/2000/svg";
const el = (parent, name, attrs, text) => {
  const node = document.createElementNS(NS, name);
  for (const key in attrs) node.setAttribute(key, attrs[key]);
  if (text) node.textContent = text;
  parent.appendChild(node);
  return node;
};
const STEP = 16.04;
const snap = (v) => Math.floor(v) + 0.5;

/* Rulers: one tick per 10 mm, a longer one per 50 mm, a label per 100 mm. */
const h = document.getElementById("hruler");
el(h, "text", { x: 411, y: 12, class: "ghost" }, "Window Snip");
for (let i = -7; i <= 38; i++) {
  const x = snap(148 + i * STEP);
  const len = i % 10 === 0 ? 21 : i % 5 === 0 ? 11 : 5;
  el(h, "path", { d: `M${x} 21v${-len}`, stroke: "#10107c" });
  if (i % 10 === 0) el(h, "text", { x: x + 1, y: 10 }, String(i * 10));
}
const v = document.getElementById("vruler");
for (let i = -3; i <= 40; i++) {
  const y = snap(55 + i * STEP);
  const len = i % 10 === 0 ? 21 : i % 5 === 0 ? 10 : 5;
  el(v, "path", { d: `M21 ${y}h${-len}`, stroke: "#10107c" });
  if (i % 10 === 0) {
    el(v, "text", { transform: `translate(11 ${y - 1}) rotate(-90)` }, i ? String(-i * 10) : "0");
  }
}

const grid = document.getElementById("grid");
for (let k = 1; k < 6; k++) {
  const x = snap(127 + k * 5 * STEP);
  el(grid, "path", { d: `M${x} 56V900` });
}
for (let k = 1; k < 8; k++) {
  const y = snap(55 + k * 5 * STEP);
  el(grid, "path", { d: `M128 ${y}H608` });
}

/* Gears: half a tooth as [half width, radius], mirrored and repeated. */
const gears = document.getElementById("gears");
function outline(cx, cy, teeth, half, smooth) {
  const pts = [];
  for (let t = 0; t < teeth; t++) {
    const a = (t * 2 * Math.PI) / teeth;
    const left = half.slice().reverse().map(([w, r]) => [-w, r]);
    const right = half[0][0] === 0 ? half.slice(1) : half;
    for (const [w, r] of left.concat(right)) {
      pts.push([cx + w * Math.cos(a) + r * Math.sin(a), cy + w * Math.sin(a) - r * Math.cos(a)]);
    }
  }
  const n = pts.length;
  const f = (p) => p[0].toFixed(1) + " " + p[1].toFixed(1);
  if (!smooth) return "M" + pts.map(f).join("L") + "Z";
  let d = "M" + f(pts[0]);
  for (let i = 0; i < n; i++) {
    const p0 = pts[(i + n - 1) % n], p1 = pts[i], p2 = pts[(i + 1) % n], p3 = pts[(i + 2) % n];
    const c1 = [p1[0] + (p2[0] - p0[0]) / 6, p1[1] + (p2[1] - p0[1]) / 6];
    const c2 = [p2[0] - (p3[0] - p1[0]) / 6, p2[1] - (p3[1] - p1[1]) / 6];
    d += "C" + f(c1) + " " + f(c2) + " " + f(p2);
  }
  return d + "Z";
}
const list = [
  { c: [189, 117], n: 12, half: [[0, 61], [5, 59], [7, 54], [7, 48], [9, 42]], smooth: true, dot: [237, 108], lead: "M244 109l-7-7M244 109l-9 2" },
  { c: [336, 117], n: 14, half: [[4, 57], [6, 54], [7, 46], [9, 44]], smooth: false, dot: [391, 107], lead: "M385 104l6 3" },
  { c: [492, 117], n: 14, half: [[0, 61], [4.5, 60], [6.500, 55], [6.500, 49], [8.500, 45.500]], smooth: true, dot: [545, 111], lead: "M551 109l-9 3M551 108l-3 9" },
  { c: [328, 281], n: 15, half: [[0, 56], [3.500, 55], [5, 51], [6, 47], [8, 45]], smooth: true, dot: [372, 277], lead: "M372 277l-4 6M372 277l5 5" },
  { c: [492, 274], n: 15, half: [[6.500, 61], [5.500, 45], [6.500, 44]], smooth: false, dot: [551, 273], lead: "M537 273h14M537 273l-6 9M537 273l5 9" }
];
for (const g of list) {
  const cx = g.c[0] - 0.5, cy = g.c[1];
  el(gears, "path", { d: outline(cx, cy, g.n, g.half, g.smooth) });
  el(gears, "circle", { cx, cy, r: 24.5 });
  el(gears, "path", { d: `M${cx + 9} ${cy - 29}l-9 5 8 4M${cx} ${cy - 24}h4${g.lead}` });
  for (const [x, y] of [[cx + 23.5, cy - 1], g.dot]) {
    el(gears, "circle", { cx: x, cy: y, r: 3, fill: "#fff", stroke: "none" });
  }
}
```
